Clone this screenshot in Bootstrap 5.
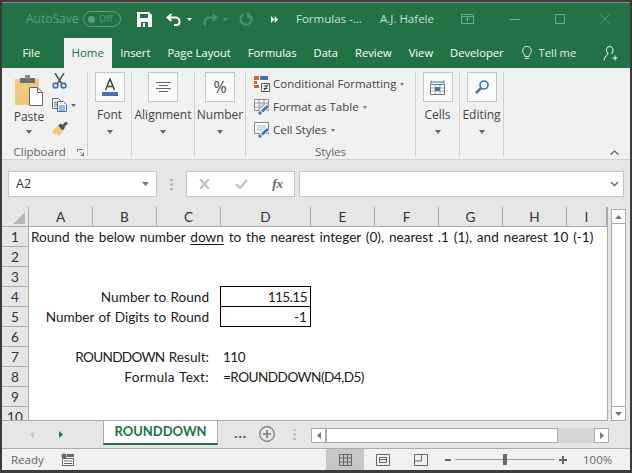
<!DOCTYPE html>
<html lang="en">
<head>
    <meta charset="UTF-8">
    <meta name="viewport" content="width=device-width, initial-scale=1.0">
    <link href="https://cdn.jsdelivr.net/npm/bootstrap@5.3.1/dist/css/bootstrap.min.css" rel="stylesheet">
    <title>Formulas - Excel</title>
    <style>
        html, body { margin: 0; height: 473px; overflow: hidden; background: #3c3c3c; }
        body { font-family: "Open Sans", "Noto Sans", sans-serif; font-size: 12px; color: #444; }
        svg { display: block; flex: none; }

        .xl-window { width: 632px; height: 473px; display: flex; flex-direction: column; border: 2px solid #3c3c3c; border-bottom-width: 3px; background: #f1f1f1; overflow: hidden; }
        .xl-green { background: #217346; color: #fff; border-top: 1px solid #8a8a8a; }

        /* title bar */
        .xl-title { height: 36px; align-items: center; flex: none; padding-bottom: 3px; }
        .xl-auto { margin-left: 24px; width: 57px; color: #5f9d7d; font-size: 12px; }
        .xl-toggle { width: 38px; height: 16px; border: 1px solid #5f9d7d; border-radius: 8px; color: #5f9d7d; font-size: 9.5px; gap: 4px; padding-left: 4px; }
        .xl-toggle i { width: 7px; height: 7px; border-radius: 50%; background: #5f9d7d; display: block; }
        .xl-save { margin-left: 16px; }
        .xl-undo { margin-left: 14px; }
        .xl-caret1 { margin-left: 6px; }
        .xl-redo { margin-left: 11px; }
        .xl-caret2 { margin-left: 5px; }
        .xl-repeat { margin-left: 11px; }
        .xl-more { margin-left: 18px; }
        .xl-doc { margin-left: 18px; width: 84px; color: #cfe0d6; white-space: nowrap; font-size: 11.5px; }
        .xl-user { width: 81px; color: #cfe0d6; white-space: nowrap; font-size: 11.5px; }
        .xl-win1 { margin-right: 35px; }
        .xl-win2 { margin-right: 35px; }
        .xl-win3 { margin-right: 35px; }

        /* ribbon tabs */
        .xl-tabs { height: 30px; flex: none; background: #217346; align-items: stretch; color: #fff; padding-left: 12px; font-size: 11.2px; }
        .xl-tab { padding: 0 8.5px; display: flex; align-items: center; white-space: nowrap; }
        .xl-tab-on { background: #f1f1f1; color: #217346; margin: 0 0 0 15px; padding: 0 7px; width: 48px; justify-content: center; font-size: 11.5px; }
        .xl-tell { margin-left: 1px; gap: 7px; color: #e4efe9; }
        .xl-adduser { margin-left: 18px; align-self: center; }

        /* ribbon */
        .xl-ribbon { height: 92px; flex: none; background: #f1f1f1; border-bottom: 1px solid #d2d2d2; padding-top: 4px; }
        .xl-group { border-right: 1px solid #d0d0d0; height: 84px; display: flex; flex-direction: column; align-items: center; font-size: 12px; color: #444; white-space: nowrap; }
        .xl-g-clip { width: 86px; }
        .xl-g-font { width: 44px; }
        .xl-g-align { width: 63px; }
        .xl-g-num { width: 51px; }
        .xl-g-styles { width: 170px; align-items: flex-start; padding: 0 0 0 8px; }
        .xl-g-cells, .xl-g-edit { width: 44px; }
        .xl-rbtn { width: 30px; height: 30px; flex: none; background: #fafafa; border: 1px solid #c6c6c6; display: flex; align-items: center; justify-content: center; }
        .xl-rlabel { margin-top: 5px; line-height: 16px; }
        .xl-drop { width: 0; height: 0; flex: none; border: 3px solid transparent; border-top: 4px solid #666; border-bottom: 0; margin-top: 7px; }
        .xl-grouplabel { color: #666; font-size: 11.5px; line-height: 14px; }

        .xl-clip-wrap { display: grid; grid-template-columns: 44px 40px; width: 84px; }
        .xl-paste { display: flex; flex-direction: column; align-items: center; padding: 3px 0 0 9px; }
        .xl-paste span { line-height: 14px; margin-top: 4px; }
        .xl-paste .xl-drop { margin-top: 6px; }
        .xl-clip-tools { display: flex; flex-direction: column; gap: 9px; padding: 1px 0 0 5px; }
        .xl-clip-foot { display: flex; width: 86px; justify-content: space-between; padding: 0 4px 0 12px; align-items: center; margin-top: auto; margin-bottom: -3px; }
        .xl-style-row { display: flex; align-items: center; gap: 3px; height: 23px; flex: none; font-size: 11.5px; }
        .xl-style-foot { align-self: center; margin-top: auto; margin-bottom: -3px; padding-right: 8px; }
        .xl-collapse { margin-left: 106px; align-self: flex-end; margin-bottom: 4px; }
        .xl-smalldrop { display: inline-block; width: 0; height: 0; border: 2.5px solid transparent; border-top: 3px solid #777; border-bottom: 0; margin-left: 4px; vertical-align: middle; }

        /* formula bar */
        .xl-fbar { height: 47px; flex: none; background: #e6e6e6; padding: 11px 6px 10px 6px; align-items: stretch; }
        .xl-box { background: #fff; border: 1px solid #c6c6c6; }
        .xl-namebox { width: 149px; padding: 0 7px; font-size: 12.5px; color: #333; }
        .xl-dots { width: 30px; }
        .xl-fx { width: 109px; padding: 0 11px 0 12px; }
        .xl-input { width: 326px; margin-left: 4px; padding-right: 4px; }
        .xl-fxtext { font-family: "Liberation Serif", serif; font-style: italic; font-weight: 700; color: #666; font-size: 13px; }

        /* worksheet */
        .xl-sheetwrap { height: 214px; flex: none; background: #e6e6e6; overflow: hidden; }
        .xl-sheet { width: 606px; display: grid; grid-template-columns: 27px 64px 64px 64px 90px 64px 64px 64px 64px 40px; grid-template-rows: 20px repeat(10, 20px); font-family: Lato, "Open Sans", sans-serif; font-size: 13.6px; word-spacing: 1.35px; color: #1a1a1a; height: 214px; overflow: hidden; background: #fff; border-right: 1px solid #ababab; border-bottom: 1px solid #ababab; }
        .xl-corner { background: #e6e6e6; border-bottom: 1px solid #ababab; border-right: 1px solid #ababab; display: flex; align-items: flex-end; justify-content: flex-end; padding: 0 3px 2px 0; }
        .xl-colh { background: #e6e6e6; border-bottom: 1px solid #ababab; border-right: 1px solid #ababab; display: flex; align-items: center; justify-content: center; color: #333; padding-top: 1px; }
        .xl-rowh { background: #e6e6e6; border-bottom: 1px solid #ababab; border-right: 1px solid #ababab; display: flex; align-items: center; justify-content: center; color: #333; grid-column: 1; line-height: 16px; }
        .xl-cell { padding: 0 2px; display: flex; align-items: center; white-space: nowrap; line-height: 16px; }
        .xl-right { justify-content: flex-end; padding-right: 12px; }
        .xl-lab { grid-column: 2 / 5; word-spacing: .8px; }
        .xl-val { grid-column: 5; }
        .xl-full { grid-column: 2 / 11; }
        .xl-cellbox { grid-column: 5; border: 1px solid #000; justify-content: flex-end; padding-right: 3px; margin-left: -1px; margin-top: -1px; }
        .xl-cellbox2 { border-top: 0; margin-top: 0; }
        .xl-u { text-decoration: underline; text-underline-offset: 2px; }
        .xl-left { padding-left: 2px; }
        .xl-tight { letter-spacing: -.55px; }
        .xl-tighter { letter-spacing: -.7px; }
        .xl-wide { letter-spacing: .3px; }

        .xl-vscroll { width: 21px; background: #e6e6e6; padding: 2px 3px 0 3px; display: flex; flex-direction: column; }
        .xl-sbtn { height: 15px; width: 15px; background: #fff; border: 1px solid #ababab; display: flex; align-items: center; justify-content: center; flex: none; }
        .xl-sthumb { flex: 1; background: #fff; border-left: 1px solid #ababab; border-right: 1px solid #ababab; }

        /* sheet tabs */
        .xl-tabbar { height: 28px; flex: none; background: #e6e6e6; border-bottom: 1px solid #ababab; align-items: flex-start; }
        .xl-sheettab { margin-left: 36px; width: 115px; height: 24px; background: #fff; border: 1px solid #ababab; border-top: 0; border-bottom: 2px solid #217346; color: #217346; font-family: Lato, "Open Sans", sans-serif; font-weight: 700; font-size: 13px; display: flex; align-items: center; justify-content: center; }
        .xl-navs { width: 65px; height: 26px; display: flex; align-items: center; padding-left: 28px; gap: 25px; }
        .xl-ell { margin-left: 16px; width: 23px; color: #217346; font-weight: 700; font-size: 13px; line-height: 24px; letter-spacing: .5px; }
        .xl-plus { margin-left: 2px; margin-top: 5px; }
        .xl-vdots { margin-left: 18px; margin-top: 8px; }
        .xl-hscroll { margin-left: 15px; margin-top: 7px; display: flex; width: 298px; height: 15px; background: #d6d6d6; }
        .xl-hthumb { width: 232px; background: #fff; border: 1px solid #ababab; flex: none; }
        .xl-hgap { flex: 1; }

        /* status bar */
        .xl-status { height: 21px; flex: none; background: #f1f1f1; align-items: center; color: #666; font-size: 11.5px; }
        .xl-ready { margin-left: 9px; width: 50px; }
        .xl-viewon { margin-left: 252px; width: 38px; height: 21px; background: #c6c6c6; display: flex; align-items: center; justify-content: center; }
        .xl-view { margin-left: 12px; }
        .xl-view2 { margin-left: 24px; }
        .xl-zoomm { margin-left: 17px; }
        .xl-slider { margin-left: 4px; width: 100px; height: 1px; background: #999; display: flex; justify-content: center; align-items: center; }
        .xl-slider i { width: 4px; height: 11px; background: #666; display: block; flex: none; }
        .xl-zoomp { margin-left: 4px; }
        .xl-pct { margin-left: 16px; }
    </style>
</head>
<body>
    <div class="xl-window">
        <div class="xl-green xl-title d-flex">
            <div class="xl-auto">AutoSave</div>
            <div class="xl-toggle d-flex align-items-center"><i></i>Off</div>
            <svg class="xl-save" width="15" height="15" viewBox="0 0 15 15"><path fill="#fff" d="M0 0h12l3 3v12H0z"/><path fill="#217346" d="M3 2h8v4H3zM4 10h7v5H4z"/><path fill="#fff" d="M6 11h2v4H6z"/></svg>
            <svg class="xl-undo" width="15" height="13" viewBox="0 0 15 13"><path fill="none" stroke="#fff" stroke-width="2" d="M5.500 1 1.500 4.500 5.500 8M2 4.500h7.500a4 4 0 0 1 4 4V9a3 3 0 0 1-3 3H8"/></svg>
            <svg class="xl-caret1" width="5" height="3" viewBox="0 0 5 3"><path fill="#fff" d="M0 0h5L2.500 3z"/></svg>
            <svg class="xl-redo" width="15" height="13" viewBox="0 0 15 13"><path fill="none" stroke="#4f9170" stroke-width="2" d="M9.500 1l4 3.500-4 3.500M13 4.500H6a4 4 0 0 0-4 4V12"/></svg>
            <svg class="xl-caret2" width="5" height="3" viewBox="0 0 5 3"><path fill="#4f9170" d="M0 0h5L2.500 3z"/></svg>
            <svg class="xl-repeat" width="14" height="14" viewBox="0 0 14 14"><path fill="none" stroke="#4f9170" stroke-width="2" d="M9.500 2.300a5.500 5.500 0 1 1-5 0M9 .5v4.500h4"/></svg>
            <svg class="xl-more" width="7" height="7" viewBox="0 0 7 7"><path fill="#fff" d="M0 0l3.300 3.500L0 7zM3.700 0 7 3.500 3.700 7z"/></svg>
            <div class="xl-doc">Formulas -...</div>
            <div class="xl-user">A.J. Hafele</div>
            <svg class="xl-win1" width="13" height="10" viewBox="0 0 13 10"><path fill="none" stroke="#70a98b" d="M.500.500h12v9H.500zM.500 2.500h12M6.500 8V4M4.500 5.500l2-2 2 2"/></svg>
            <svg class="xl-win2" width="11" height="1" viewBox="0 0 11 1"><path fill="#70a98b" d="M0 0h11v1H0z"/></svg>
            <svg class="xl-win3" width="10" height="10" viewBox="0 0 10 10"><path fill="none" stroke="#70a98b" d="M.500.500h9v9h-9z"/></svg>
            <svg width="10" height="10" viewBox="0 0 10 10"><path fill="none" stroke="#4f9170" d="M0 0l10 10M10 0 0 10"/></svg>
        </div>

        <div class="xl-tabs d-flex">
            <div class="xl-tab">File</div>
            <div class="xl-tab xl-tab-on">Home</div>
            <div class="xl-tab">Insert</div>
            <div class="xl-tab">Page Layout</div>
            <div class="xl-tab">Formulas</div>
            <div class="xl-tab">Data</div>
            <div class="xl-tab">Review</div>
            <div class="xl-tab">View</div>
            <div class="xl-tab">Developer</div>
            <div class="xl-tab xl-tell">
                <svg width="10" height="14" viewBox="0 0 10 14"><path fill="none" stroke="#e4efe9" d="M3 10.500C3 8 .7 7.500.7 4.500a4.300 4.300 0 0 1 8.600 0C9.300 7.500 7 8 7 10.500zM3 12.500h4"/></svg>
                Tell me
            </div>
            <svg class="xl-adduser" width="15" height="15" viewBox="0 0 15 15"><path fill="none" stroke="#fff" d="M6.500.500a3.500 3.500 0 0 1 3 5.500c-.5.800-.7 1.300-.5 2M1 14.500c0-3 2-4.500 3.500-5.500.5-1 .2-2-.5-3a3.500 3.500 0 0 1 2.500-5.500M12 9.500v5M9.500 12h5"/></svg>
        </div>

        <div class="xl-ribbon d-flex">
            <div class="xl-group xl-g-clip">
                <div class="xl-clip-wrap">
                    <div class="xl-paste">
                        <svg width="28" height="31" viewBox="0 0 28 31"><path fill="#f0c97f" d="M0 4h24v26H0z"/><path fill="#6e6e6e" d="M5 3h15v5H5z"/><path fill="#8a8a8a" d="M10 0h5v4h-5z"/><path fill="#fff" stroke="#666" d="M14.500 12.500h8l5 5v13h-13z"/><path fill="none" stroke="#666" d="M22.500 12.500v5h5"/></svg>
                        <span>Paste</span>
                        <div class="xl-drop"></div>
                    </div>
                    <div class="xl-clip-tools">
                        <svg width="15" height="16" viewBox="0 0 15 16"><path fill="none" stroke="#555" stroke-width="1.500" d="M3 0l6.500 10.500M12 0 5.500 10.500"/><circle cx="3.500" cy="12.500" r="2.400" fill="none" stroke="#3f74b1" stroke-width="1.600"/><circle cx="11.500" cy="12.500" r="2.400" fill="none" stroke="#3f74b1" stroke-width="1.600"/></svg>
                        <div class="d-flex align-items-center gap-1">
                            <svg width="15" height="14" viewBox="0 0 15 14"><path fill="#fff" stroke="#666" d="M.500.500h6l2 2v8h-8zM2 4h4M2 6h3M2 8h3"/><path fill="#fff" stroke="#3f74b1" d="M5.500 3.500h6l3 3v7h-9z"/><path stroke="#3f74b1" d="M7 8h6M7 10h6M7 12h6"/></svg>
                            <svg width="5" height="3" viewBox="0 0 5 3"><path fill="#666" d="M0 0h5L2.500 3z"/></svg>
                        </div>
                        <svg width="16" height="15" viewBox="0 0 16 15"><path fill="#f0c97f" d="M0 10 6 5l5 5-4 5-3-2-1.500.8z"/><path stroke="#555" stroke-width="3" d="M8.500 7.500 15 1.500"/><path fill="#555" d="M6 4.500l3-2 4 4-2 3z"/></svg>
                    </div>
                </div>
                <div class="xl-clip-foot">
                    <span class="xl-grouplabel">Clipboard</span>
                    <svg width="7" height="7" viewBox="0 0 7 7"><path fill="none" stroke="#777" d="M.500 3V.500H6M6.500 6.500l-3-3M6.500 3.500v3h-3"/></svg>
                </div>
            </div>
            <div class="xl-group xl-g-font">
                <div class="xl-rbtn"><svg width="16" height="18" viewBox="0 0 16 18"><path fill="none" stroke="#444" stroke-width="1.500" d="M3.500 12 8 1l4.500 11M5 8.500h6"/><path fill="#3f74b1" d="M0 14h16v4H0z"/></svg></div>
                <div class="xl-rlabel">Font</div>
                <div class="xl-drop"></div>
            </div>
            <div class="xl-group xl-g-align">
                <div class="xl-rbtn"><svg width="15" height="10" viewBox="0 0 15 10"><path stroke="#666" d="M0 .500h15M3 3.500h9M0 6.500h15M3 9.500h9"/></svg></div>
                <div class="xl-rlabel">Alignment</div>
                <div class="xl-drop"></div>
            </div>
            <div class="xl-group xl-g-num">
                <div class="xl-rbtn"><span class="fs-6">%</span></div>
                <div class="xl-rlabel">Number</div>
                <div class="xl-drop"></div>
            </div>
            <div class="xl-group xl-g-styles">
                <div class="xl-style-row">
                    <svg width="16" height="16" viewBox="0 0 16 16"><path fill="#fff" d="M0 0h13v13H0z"/><path fill="#d2603a" d="M0 0h5v4H0zM0 5h3v3H0zM0 9h5v3H0z"/><path fill="#3f74b1" d="M6 0h8v4H6z"/><path fill="#fff" stroke="#555" d="M7.500 7.500h8v8h-8z"/><path stroke="#333" d="M9.500 10h4M9.500 12.500h4M10 14.500l4-6"/></svg>
                    <span>Conditional Formatting<i class="xl-smalldrop"></i></span>
                </div>
                <div class="xl-style-row">
                    <svg width="16" height="16" viewBox="0 0 16 16"><path fill="#fff" stroke="#888" d="M.500.500h14v11H.500z"/><path fill="#cfdcec" d="M5 4h9v7H5z"/><path stroke="#999" d="M5 1v10M10 1v10M1 4h13M1 8h13"/><path stroke="#fff" stroke-width="5" d="M7 13l7-6"/><path stroke="#3f74b1" stroke-width="3" d="M5 15l2-2M8 12.500l6-5.500"/></svg>
                    <span>Format as Table<i class="xl-smalldrop"></i></span>
                </div>
                <div class="xl-style-row">
                    <svg width="16" height="16" viewBox="0 0 16 16"><path fill="#fff" stroke="#888" d="M.500.500h14v11H.500z"/><path fill="#cfdcec" d="M3 3h9v6H3z"/><path stroke="#fff" stroke-width="5" d="M7 13l7-6"/><path stroke="#3f74b1" stroke-width="3" d="M5 15l2-2M8 12.500l6-5.500"/></svg>
                    <span>Cell Styles<i class="xl-smalldrop"></i></span>
                </div>
                <span class="xl-grouplabel xl-style-foot">Styles</span>
            </div>
            <div class="xl-group xl-g-cells">
                <div class="xl-rbtn"><svg width="15" height="15" viewBox="0 0 15 15"><path stroke="#3f74b1" d="M1 .500v3M14 .500v3M1 2h13"/><path fill="#fff" stroke="#777" d="M.500 4.500h14v10H.500z"/><path stroke="#aaa" d="M5 5v9M10 5v9M1 8h13M1 11h13"/><path fill="#3f74b1" d="M5 7h5v4H5z"/></svg></div>
                <div class="xl-rlabel">Cells</div>
                <div class="xl-drop"></div>
            </div>
            <div class="xl-group xl-g-edit">
                <div class="xl-rbtn"><svg width="14" height="14" viewBox="0 0 14 14"><circle cx="9" cy="5" r="4" fill="none" stroke="#3f74b1" stroke-width="1.600"/><path stroke="#3f74b1" stroke-width="2.500" d="M6 8l-5 5"/></svg></div>
                <div class="xl-rlabel">Editing</div>
                <div class="xl-drop"></div>
            </div>
            <svg class="xl-collapse" width="9" height="5" viewBox="0 0 9 5"><path fill="none" stroke="#666" stroke-width="1.300" d="M.500 4.500l4-3.500 4 3.500"/></svg>
        </div>

        <div class="xl-fbar d-flex">
            <div class="xl-box xl-namebox d-flex align-items-center justify-content-between">
                <span>A2</span>
                <svg width="7" height="4" viewBox="0 0 7 4"><path fill="#777" d="M0 0h7L3.500 4z"/></svg>
            </div>
            <div class="xl-dots d-flex align-items-center justify-content-center">
                <svg width="3" height="11" viewBox="0 0 3 11"><path fill="#b0b0b0" d="M0 0h3v2H0zM0 4.500h3v2H0zM0 9h3v2H0z"/></svg>
            </div>
            <div class="xl-box xl-fx d-flex align-items-center justify-content-between">
                <svg width="11" height="10" viewBox="0 0 11 10"><path stroke="#c0c0c0" stroke-width="2" d="M1 0l9 10M10 0 1 10"/></svg>
                <svg width="13" height="10" viewBox="0 0 13 10"><path fill="none" stroke="#c0c0c0" stroke-width="2.200" d="M1 5l4 4 7-8"/></svg>
                <span class="xl-fxtext">fx</span>
            </div>
            <div class="xl-box xl-input d-flex align-items-center justify-content-end">
                <svg width="9" height="6" viewBox="0 0 9 6"><path fill="none" stroke="#777" stroke-width="1.600" d="M1 1l3.500 3.500L8 1"/></svg>
            </div>
        </div>

        <div class="xl-sheetwrap d-flex">
            <div class="xl-sheet">
                <div class="xl-corner"><svg width="12" height="12" viewBox="0 0 12 12"><path fill="#b8b8b8" d="M12 0v12H0z"/></svg></div>
                <div class="xl-colh">A</div><div class="xl-colh">B</div><div class="xl-colh">C</div><div class="xl-colh">D</div><div class="xl-colh">E</div><div class="xl-colh">F</div><div class="xl-colh">G</div><div class="xl-colh">H</div><div class="xl-colh">I</div>

                <div class="xl-rowh">1</div>
                <div class="xl-cell xl-full">Round the below number&nbsp;<span class="xl-u">down</span>&nbsp;to the nearest integer (0), nearest .1 (1), and nearest 10 (-1)</div>
                <div class="xl-rowh">2</div>
                <div class="xl-rowh">3</div>
                <div class="xl-rowh">4</div>
                <div class="xl-cell xl-lab xl-right">Number to Round</div>
                <div class="xl-cell xl-cellbox xl-tight">115.15</div>
                <div class="xl-rowh">5</div>
                <div class="xl-cell xl-lab xl-right">Number of Digits to Round</div>
                <div class="xl-cell xl-cellbox xl-cellbox2">-1</div>
                <div class="xl-rowh">6</div>
                <div class="xl-rowh">7</div>
                <div class="xl-cell xl-lab xl-right"><span><span class="xl-tighter">ROUNDDOWN</span> Result:</span></div>
                <div class="xl-cell xl-val xl-left xl-tight">110</div>
                <div class="xl-rowh">8</div>
                <div class="xl-cell xl-lab xl-right xl-wide">Formula Text:</div>
                <div class="xl-cell xl-val xl-left xl-tight">=ROUNDDOWN(D4,D5)</div>
                <div class="xl-rowh">9</div>
                <div class="xl-rowh">10</div>
            </div>
            <div class="xl-vscroll">
                <div class="xl-sbtn"><svg width="7" height="4" viewBox="0 0 7 4"><path fill="#777" d="M3.500 0 7 4H0z"/></svg></div>
                <div class="xl-sthumb"></div>
                <div class="xl-sbtn"><svg width="7" height="4" viewBox="0 0 7 4"><path fill="#777" d="M0 0h7L3.500 4z"/></svg></div>
            </div>
        </div>

        <div class="xl-tabbar d-flex">
            <div class="xl-navs">
                <svg width="4" height="7" viewBox="0 0 4 7"><path fill="#c6c6c6" d="M4 0v7L0 3.500z"/></svg>
                <svg width="4" height="7" viewBox="0 0 4 7"><path fill="#217346" d="M0 0v7l4-3.500z"/></svg>
            </div>
            <div class="xl-sheettab">ROUNDDOWN</div>
            <div class="xl-ell">...</div>
            <svg class="xl-plus" width="16" height="16" viewBox="0 0 16 16"><circle cx="8" cy="8" r="7.300" fill="none" stroke="#777" stroke-width="1.200"/><path stroke="#777" stroke-width="1.500" d="M4 8h8M8 4v8"/></svg>
            <svg class="xl-vdots" width="3" height="11" viewBox="0 0 3 11"><path fill="#c0c0c0" d="M0 0h3v2H0zM0 4.500h3v2H0zM0 9h3v2H0z"/></svg>
            <div class="xl-hscroll">
                <div class="xl-sbtn"><svg width="4" height="7" viewBox="0 0 4 7"><path fill="#777" d="M4 0v7L0 3.500z"/></svg></div>
                <div class="xl-hthumb"></div>
                <div class="xl-hgap"></div>
                <div class="xl-sbtn"><svg width="4" height="7" viewBox="0 0 4 7"><path fill="#777" d="M0 0v7l4-3.500z"/></svg></div>
            </div>
        </div>

        <div class="xl-status d-flex">
            <div class="xl-ready">Ready</div>
            <svg width="13" height="13" viewBox="0 0 13 13"><circle cx="3" cy="3" r="2.500" fill="#666"/><path fill="#666" d="M6 1h7v3H6z"/><path fill="#fff" stroke="#666" d="M1.500 5.500h11v7h-11z"/><path stroke="#666" d="M3 8h8M3 10.500h8"/></svg>
            <div class="xl-viewon"><svg width="13" height="12" viewBox="0 0 13 12"><path fill="none" stroke="#666" d="M.500.500h12v11H.500zM4.500.500v11M8.500.500v11M.500 4h12M.500 8h12"/></svg></div>
            <svg class="xl-view" width="14" height="12" viewBox="0 0 14 12"><path fill="none" stroke="#666" d="M.500.500h13v11H.500zM3.500 3.500h7v5h-7zM4 5.500h6"/></svg>
            <svg class="xl-view2" width="14" height="12" viewBox="0 0 14 12"><path fill="none" stroke="#666" d="M.500.500h13v11H.500zM.500 7h7V.500"/></svg>
            <svg class="xl-zoomm" width="6" height="2" viewBox="0 0 6 2"><path fill="#666" d="M0 0h6v2H0z"/></svg>
            <div class="xl-slider"><i></i></div>
            <svg class="xl-zoomp" width="8" height="8" viewBox="0 0 8 8"><path fill="#666" d="M3 0h2v3h3v2H5v3H3V5H0V3h3z"/></svg>
            <div class="xl-pct">100%</div>
        </div>
    </div>
</body>
</html>
